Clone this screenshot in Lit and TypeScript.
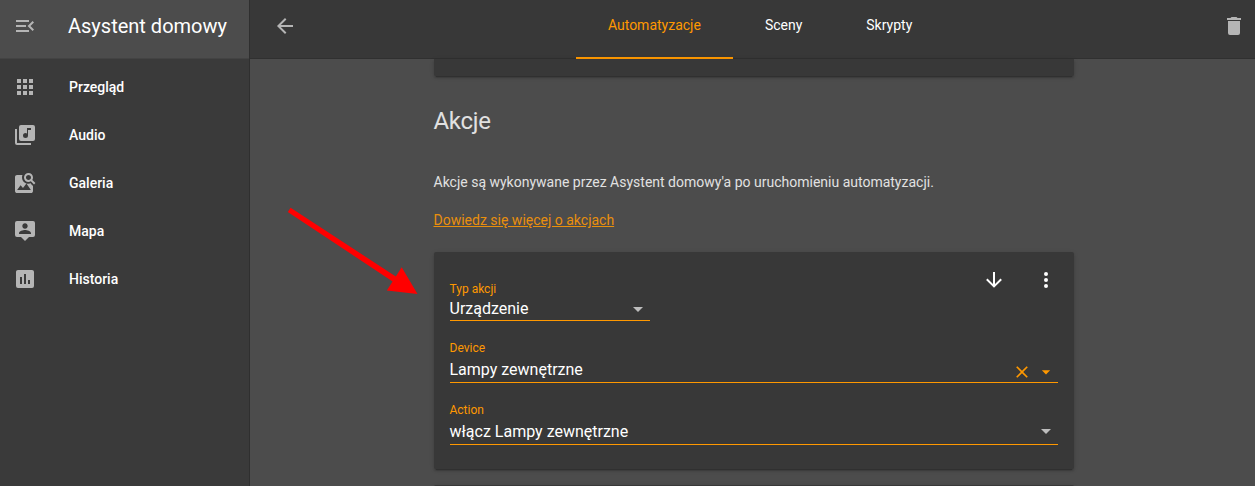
import { LitElement, html, css, svg } from "lit";
import { customElement, property } from "lit/decorators.js";

const ICONS: Record<string, string> = {
  menuOpen:
    "M21,15.61L19.59,17L14.58,12L19.59,7L21,8.39L17.44,12L21,15.61M3,6H16V8H3V6M3,13V11H13V13H3M3,18V16H16V18H3Z",
  apps: "M16,20H20V16H16M16,14H20V10H16M10,8H14V4H10M16,8H20V4H16M10,14H14V10H10M4,14H8V10H4M4,20H8V16H4M10,20H14V16H10M4,8H8V4H4V8Z",
  music:
    "M20,2H8A2,2 0 0,0 6,4V16A2,2 0 0,0 8,18H20A2,2 0 0,0 22,16V4A2,2 0 0,0 20,2M18,7H15V12.5A2.5,2.5 0 0,1 12.5,15A2.5,2.5 0 0,1 10,12.5A2.5,2.5 0 0,1 12.5,10C13.07,10 13.58,10.19 14,10.5V5H18M4,6H2V20A2,2 0 0,0 4,22H18V20H4V6Z",
  imageSearch:
    "M15.5,9C16.2,9 16.79,8.76 17.27,8.27C17.76,7.79 18,7.2 18,6.5C18,5.83 17.76,5.23 17.27,4.73C16.79,4.23 16.2,4 15.5,4C14.83,4 14.23,4.23 13.73,4.73C13.23,5.23 13,5.83 13,6.5C13,7.2 13.23,7.79 13.73,8.27C14.23,8.76 14.83,9 15.5,9M19.31,8.91L22.41,12L21,13.41L17.86,10.31C17.08,10.78 16.28,11 15.47,11C14.22,11 13.16,10.58 12.3,9.7C11.45,8.83 11,7.77 11,6.5C11,5.27 11.45,4.2 12.33,3.33C13.2,2.45 14.27,2 15.5,2C16.77,2 17.83,2.45 18.7,3.33C19.58,4.2 20,5.27 20,6.5C20,7.33 19.78,8.13 19.31,8.91M17.9,19H4.1L7.6,14.3L10,17.1L13.4,12.6L17.9,19M18,13L20,15V20C20,20.55 19.81,21 19.41,21.4C19,21.79 18.53,22 18,22H4C3.45,22 3,21.79 2.6,21.4C2.21,21 2,20.55 2,20V6C2,5.47 2.21,5 2.6,4.59C3,4.19 3.45,4 4,4H9.5C9.2,4.64 9.03,5.31 9,6C8.97,8.1 9.7,10 11.18,11.35C11.9,12 12.6,12.2 13.4,12.4C14.6,12.9 16.6,12.9 18,12.3V13Z",
  tooltipAccount:
    "M20,2H4A2,2 0 0,0 2,4V16A2,2 0 0,0 4,18H8L12,22L16,18H20A2,2 0 0,0 22,16V4A2,2 0 0,0 20,2M12,4.3C13.5,4.3 14.7,5.5 14.7,7C14.7,8.5 13.5,9.7 12,9.7C10.5,9.7 9.3,8.5 9.3,7C9.3,5.5 10.5,4.3 12,4.3M18,15H6V14.1C6,12.1 10,11 12,11C14,11 18,12.1 18,14.1V15Z",
  chart:
    "M9,17H7V10H9M13,17H11V7H13M17,17H15V13H17M19,3H5C3.89,3 3,3.89 3,5V19A2,2 0 0,0 5,21H19A2,2 0 0,0 21,19V5C21,3.89 20.1,3 19,3Z",
  back: "M20 11H7.83l5.59-5.59L12 4l-8 8 8 8 1.41-1.41L7.83 13H20v-2z",
  trash:
    "M19,4H15.5L14.5,3H9.5L8.5,4H5V6H19M6,19A2,2 0 0,0 8,21H16A2,2 0 0,0 18,19V7H6V19Z",
  down: "M11,4H13V16L18.5,10.5L19.92,11.92L12,19.84L4.08,11.92L5.5,10.5L11,16V4Z",
  dots: "M12,16A2,2 0 0,1 14,18A2,2 0 0,1 12,20A2,2 0 0,1 10,18A2,2 0 0,1 12,16M12,10A2,2 0 0,1 14,12A2,2 0 0,1 12,14A2,2 0 0,1 10,12A2,2 0 0,1 12,10M12,4A2,2 0 0,1 14,6A2,2 0 0,1 12,8A2,2 0 0,1 10,6A2,2 0 0,1 12,4Z",
  clear:
    "M19 6.41L17.59 5 12 10.59 6.41 5 5 6.41 10.59 12 5 17.59 6.41 19 12 13.41 17.59 19 19 17.59 13.41 12z",
  caret: "M7 10l5 5 5-5z",
};

@customElement("ui-icon")
class UiIcon extends LitElement {
  @property() name = "";

  static styles = css`
    :host {
      display: block;
      flex: none;
      width: 24px;
      height: 24px;
    }
    .glyph {
      display: block;
      width: 100%;
      height: 100%;
      fill: currentColor;
      fill-rule: evenodd;
    }
  `;

  render() {
    return html`<svg class="glyph" viewBox="0 0 24 24">
      ${svg`<path d=${ICONS[this.name] ?? ""}></path>`}
    </svg>`;
  }
}

@customElement("side-bar")
class SideBar extends LitElement {
  private items = [
    ["apps", "Przegląd"],
    ["music", "Audio"],
    ["imageSearch", "Galeria"],
    ["tooltipAccount", "Mapa"],
    ["chart", "Historia"],
  ];

  static styles = css`
    :host {
      display: flex;
      flex-direction: column;
      box-sizing: border-box;
      width: 250px;
      flex: none;
      background: #3a3a3a;
      border-right: 1px solid #2f2f2f;
    }
    .head {
      display: flex;
      align-items: center;
      gap: 31px;
      box-sizing: border-box;
      height: 59px;
      padding: 0 13px 6px;
      background: #4c4c4c;
      border-bottom: 1px solid #434343;
      color: #b5b5b5;
    }
    .title {
      color: #fff;
      font-size: 20px;
      line-height: 24px;
      white-space: nowrap;
    }
    .nav {
      display: flex;
      flex-direction: column;
      padding-top: 4px;
    }
    .item {
      display: flex;
      align-items: center;
      gap: 32px;
      height: 48px;
      padding-left: 13px;
      color: #b5b5b5;
    }
    .label {
      color: #fff;
      font-size: 14px;
      font-weight: 500;
      line-height: 20px;
    }
  `;

  render() {
    return html`
      <div class="head">
        <ui-icon name="menuOpen"></ui-icon>
        <div class="title">Asystent domowy</div>
      </div>
      <nav class="nav">
        ${this.items.map(
          ([icon, label]) => html`<div class="item">
            <ui-icon name=${icon}></ui-icon><span class="label">${label}</span>
          </div>`
        )}
      </nav>
    `;
  }
}

@customElement("top-bar")
class TopBar extends LitElement {
  static styles = css`
    :host {
      display: flex;
      box-sizing: border-box;
      height: 59px;
      flex: none;
      padding: 0 9px 0 23px;
      justify-content: space-between;
      background: #383838;
      border-bottom: 1px solid #303030;
      color: #b5b5b5;
    }
    .icon {
      margin-top: 14px;
    }
    .tabs {
      display: flex;
      margin-left: 1.2px;
    }
    .tab {
      box-sizing: border-box;
      height: 59px;
      padding: 15px 32px 0;
      color: #fff;
      font-size: 14px;
      line-height: 20px;
      border-bottom: 2px solid transparent;
    }
    .active {
      color: #ff9800;
      border-bottom-color: #ff9800;
    }
  `;

  render() {
    return html`
      <ui-icon class="icon" name="back"></ui-icon>
      <div class="tabs">
        <div class="tab active">Automatyzacje</div>
        <div class="tab">Sceny</div>
        <div class="tab">Skrypty</div>
      </div>
      <ui-icon class="icon" name="trash"></ui-icon>
    `;
  }
}

@customElement("action-card")
class ActionCard extends LitElement {
  static styles = css`
    :host {
      display: block;
      box-sizing: border-box;
      height: 217px;
      padding: 16px 16px 0;
      background: #383838;
      border-radius: 2px;
      box-shadow: 0 2px 2px 0 rgba(0, 0, 0, 0.14),
        0 1px 5px 0 rgba(0, 0, 0, 0.12), 0 3px 1px -2px rgba(0, 0, 0, 0.2);
    }
    .top {
      display: flex;
      justify-content: space-between;
    }
    .tools {
      display: flex;
      gap: 28px;
      color: #fff;
    }
    .field {
      box-sizing: border-box;
      border-bottom: 1px solid #ff9800;
    }
    .narrow {
      width: 200px;
      height: 53px;
      padding-top: 13px;
    }
    .wide {
      height: 62px;
      padding-top: 19px;
    }
    .label {
      color: #ff9800;
      font-size: 12px;
      line-height: 16px;
    }
    .row {
      display: flex;
      align-items: center;
      height: 24px;
      color: #bdbdbd;
    }
    .wide .row {
      margin-top: 1px;
    }
    .value {
      flex: 1;
      color: #fff;
      font-size: 16px;
      line-height: 24px;
    }
    .wide .value {
      margin-top: 2px;
    }
    .small {
      width: 20px;
      height: 20px;
      margin: 6px 2px 0;
      color: #ff9800;
    }
  `;

  render() {
    return html`
      <div class="top">
        <div class="field narrow">
          <div class="label">Typ akcji</div>
          <div class="row">
            <span class="value">Urządzenie</span><ui-icon name="caret"></ui-icon>
          </div>
        </div>
        <div class="tools">
          <ui-icon name="down"></ui-icon><ui-icon name="dots"></ui-icon>
        </div>
      </div>
      <div class="field wide">
        <div class="label">Device</div>
        <div class="row">
          <span class="value">Lampy zewnętrzne</span>
          <ui-icon class="small" name="clear"></ui-icon>
          <ui-icon class="small" name="caret"></ui-icon>
        </div>
      </div>
      <div class="field wide">
        <div class="label">Action</div>
        <div class="row">
          <span class="value">włącz Lampy zewnętrzne</span><ui-icon name="caret"></ui-icon>
        </div>
      </div>
    `;
  }
}

@customElement("app-root")
class AppRoot extends LitElement {
  static styles = css`
    :host {
      display: flex;
      position: relative;
      width: 100%;
      height: 486px;
      overflow: hidden;
      background: #4c4c4c;
      font-family: Roboto, sans-serif;
    }
    .main {
      display: flex;
      flex-direction: column;
      flex: 1;
      min-width: 0;
    }
    .content {
      width: 640px;
      margin-left: 183.5px;
      color: #e1e1e1;
    }
    .stub {
      height: 17px;
      background: #383838;
      border-radius: 0 0 2px 2px;
      box-shadow: 0 2px 2px 0 rgba(0, 0, 0, 0.14),
        0 1px 5px 0 rgba(0, 0, 0, 0.12), 0 3px 1px -2px rgba(0, 0, 0, 0.2);
    }
    .heading {
      margin: 29px 0 0;
      font-size: 24px;
      font-weight: 400;
      letter-spacing: -0.012em;
      line-height: 32px;
    }
    .text {
      margin: 35px 0 0;
      font-size: 14px;
      line-height: 20px;
    }
    .link {
      margin: 18px 0 22px;
      font-size: 14px;
      line-height: 20px;
      color: #e98f0c;
      text-decoration: underline;
    }
    .next {
      height: 20px;
      margin-top: 16px;
      background: #383838;
      border-radius: 2px;
      box-shadow: 0 1px 5px 0 rgba(0, 0, 0, 0.12);
    }
    .pointer {
      position: absolute;
      left: 280px;
      top: 200px;
      width: 150px;
      height: 105px;
      fill: #f00;
    }
  `;

  render() {
    return html`
      <side-bar></side-bar>
      <div class="main">
        <top-bar></top-bar>
        <div class="content">
          <div class="stub"></div>
          <h2 class="heading">Akcje</h2>
          <p class="text">
            Akcje są wykonywane przez Asystent domowy'a po uruchomieniu automatyzacji.
          </p>
          <div class="link">Dowiedz się więcej o akcjach</div>
          <action-card></action-card>
          <div class="next"></div>
        </div>
      </div>
      <svg class="pointer" viewBox="0 0 150 105">
        <path d="M10.6 7.7L115.8 76.5L121.7 67.2L137.5 94L106.8 90.6L112.6 81.4L7.8 12.1Z"></path>
      </svg>
    `;
  }
}
